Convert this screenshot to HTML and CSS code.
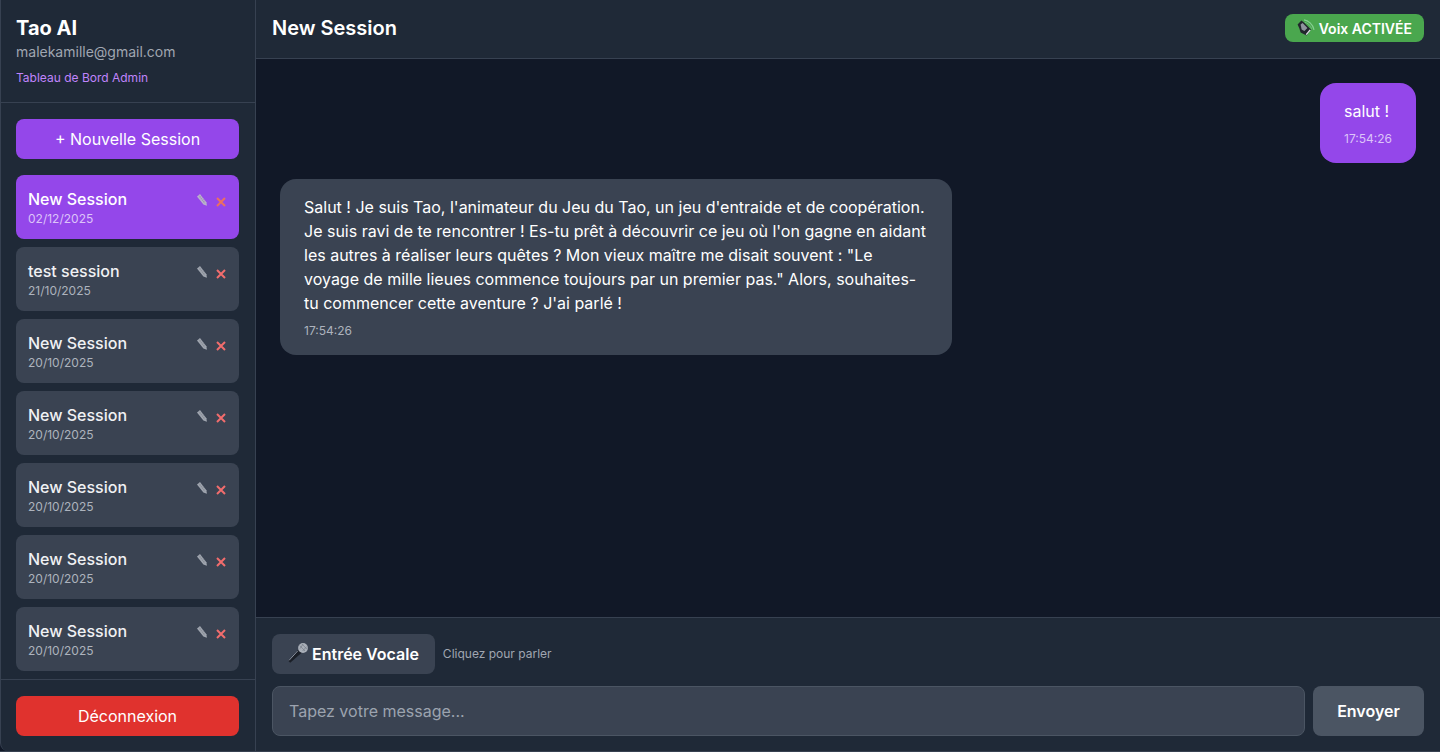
FILE: index.html
```html
<!DOCTYPE html>
<html lang="fr">
<head>
<meta charset="utf-8">
<title>Tao AI</title>
<link rel="stylesheet" href="styles.css">
</head>
<body>
<svg class="defs" width="0" height="0" aria-hidden="true">
  <symbol id="pencil" viewBox="0 0 10 12">
    <path d="M0 2.6 3 0 9.4 8.2 9.9 11.8 6.4 10.6Z" fill="currentColor"/>
    <path d="M1.8 1.4 8 9.6" stroke="#00000026" stroke-width=".6" fill="none"/>
    <path d="M2.4 3.4 4.6 2M3.6 5 5.8 3.6M4.8 6.6 7 5.2M6 8.2 8.2 6.8" stroke="#00000026" stroke-width=".6" fill="none"/>
  </symbol>
  <symbol id="cross" viewBox="0 0 10 10">
    <path d="M1 1 9 9M9 1 1 9" stroke="currentColor" stroke-width="2" fill="none"/>
  </symbol>
</svg>
<div class="app">
  <aside class="sidebar">
    <header class="side-head">
      <h1 class="brand">Tao AI</h1>
      <p class="email">malekamille@gmail.com</p>
      <a class="admin">Tableau de Bord Admin</a>
    </header>
    <div class="side-new">
      <button class="btn-primary">+ Nouvelle Session</button>
    </div>
    <ul class="sessions">
      <li class="session active">
        <div class="s-text"><div class="s-title">New Session</div><div class="s-date">02/12/2025</div></div>
        <div class="s-actions"><svg class="i-pencil"><use href="#pencil"/></svg><svg class="i-cross"><use href="#cross"/></svg></div>
      </li>
      <li class="session">
        <div class="s-text"><div class="s-title">test session</div><div class="s-date">21/10/2025</div></div>
        <div class="s-actions"><svg class="i-pencil"><use href="#pencil"/></svg><svg class="i-cross"><use href="#cross"/></svg></div>
      </li>
      <li class="session">
        <div class="s-text"><div class="s-title">New Session</div><div class="s-date">20/10/2025</div></div>
        <div class="s-actions"><svg class="i-pencil"><use href="#pencil"/></svg><svg class="i-cross"><use href="#cross"/></svg></div>
      </li>
      <li class="session">
        <div class="s-text"><div class="s-title">New Session</div><div class="s-date">20/10/2025</div></div>
        <div class="s-actions"><svg class="i-pencil"><use href="#pencil"/></svg><svg class="i-cross"><use href="#cross"/></svg></div>
      </li>
      <li class="session">
        <div class="s-text"><div class="s-title">New Session</div><div class="s-date">20/10/2025</div></div>
        <div class="s-actions"><svg class="i-pencil"><use href="#pencil"/></svg><svg class="i-cross"><use href="#cross"/></svg></div>
      </li>
      <li class="session">
        <div class="s-text"><div class="s-title">New Session</div><div class="s-date">20/10/2025</div></div>
        <div class="s-actions"><svg class="i-pencil"><use href="#pencil"/></svg><svg class="i-cross"><use href="#cross"/></svg></div>
      </li>
      <li class="session">
        <div class="s-text"><div class="s-title">New Session</div><div class="s-date">20/10/2025</div></div>
        <div class="s-actions"><svg class="i-pencil"><use href="#pencil"/></svg><svg class="i-cross"><use href="#cross"/></svg></div>
      </li>
    </ul>
    <div class="side-foot">
      <button class="btn-logout">Déconnexion</button>
    </div>
  </aside>
  <main class="main">
    <header class="topbar">
      <h2 class="top-title">New Session</h2>
      <button class="voice-toggle">
        <svg class="i-speaker" viewBox="0 0 18 18">
          <path d="M7 .8c4 .6 9 4.4 10 10" stroke="#86cf92" stroke-width="1.2" fill="none"/>
          <path d="M7.6 3.2c3 .6 6 3.2 7 6.6" stroke="#6fc17c" stroke-width="1" fill="none"/>
          <path d="M.6 5.4 4.4 1.6 7 3.6 14 10.4 9.6 16.6 3.6 13.6 2.4 9.4Z" fill="#22262d"/>
          <path d="M3.6 5.6 5.6 4 10.4 9 7.4 12 4.6 10.4Z" fill="#8f959e"/>
          <path d="M9.2 15.6 13.2 10.8" stroke="#e4e6ea" stroke-width="1.3"/>
        </svg>
        <span>Voix ACTIVÉE</span>
      </button>
    </header>
    <section class="messages">
      <div class="row row-user">
        <div class="bubble bubble-user">
          <p class="msg-text">salut !</p>
          <time class="msg-time">17:54:26</time>
        </div>
      </div>
      <div class="row">
        <div class="bubble bubble-bot">
          <p class="msg-text">Salut ! Je suis Tao, l'animateur du Jeu du Tao, un jeu d'entraide et de coopération. Je suis ravi de te rencontrer ! Es-tu prêt à découvrir ce jeu où l'on gagne en aidant les autres à réaliser leurs quêtes ? Mon vieux maître me disait souvent : "Le voyage de mille lieues commence toujours par un premier pas." Alors, souhaites-tu commencer cette aventure ? J'ai parlé !</p>
          <time class="msg-time">17:54:26</time>
        </div>
      </div>
    </section>
    <footer class="composer">
      <div class="voice-row">
        <button class="btn-voice">
          <svg class="i-mic" viewBox="0 0 20 20">
            <path d="M.2 17.8 10 6.8 13.4 10 2.2 19.8Z" fill="#1b1f27"/>
            <path d="M1 17.4 9.8 7.8" stroke="#8b93a1" stroke-width="1"/>
            <circle cx="15" cy="5" r="4.9" fill="#a9afb8"/>
            <path d="M11.8 2.6 17 8M13.8 .9 19 6.2M12 5.6 15 1.2M14.6 8 18.6 3.6" stroke="#747b87" stroke-width=".7"/>
          </svg>
          <span>Entrée Vocale</span>
        </button>
        <span class="voice-hint">Cliquez pour parler</span>
      </div>
      <div class="input-row">
        <input class="msg-input" type="text" placeholder="Tapez votre message...">
        <button class="btn-send">Envoyer</button>
      </div>
    </footer>
  </main>
</div>
</body>
</html>
```
FILE: styles.css
```css
* { box-sizing: border-box; }
html, body { margin: 0; height: 100%; }
body {
  font-family: Inter, "Liberation Sans", sans-serif;
  background: #111827;
  color: #fff;
  overflow: hidden;
}
.defs { position: absolute; }
button, input { font-family: inherit; border: 0; }
button { cursor: pointer; color: #fff; }
.app { display: flex; height: 752px; border-bottom: 1px solid #374151; }

.sidebar {
  width: 256px;
  flex: none;
  display: flex;
  flex-direction: column;
  background: #1f2937;
  border-right: 1px solid #374151;
  border-left: 1px solid #374151;
  border-bottom-left-radius: 8px;
}
.side-head {
  height: 103px;
  padding: 16px 16px 0 15px;
  border-bottom: 1px solid #374151;
}
.brand { margin: 0; font-size: 20px; line-height: 24px; font-weight: 700; }
.email { margin: 2px 0 0; font-size: 14px; line-height: 20px; color: #a0a6b1; }
.admin { display: block; margin-top: 8px; font-size: 12px; line-height: 16px; color: #c084fc; }
.side-new { padding: 16px 16px 16px 15px; }
.btn-primary, .btn-logout {
  display: block;
  width: 100%;
  height: 40px;
  border-radius: 8px;
  font-size: 16px;
  font-weight: 400;
}
.btn-primary { background: #9447ea; }
.sessions {
  list-style: none;
  margin: 0;
  padding: 0 16px 0 15px;
  flex: 1;
  min-height: 0;
  overflow: hidden;
  display: flex;
  flex-direction: column;
  gap: 8px;
}
.session {
  flex: none;
  height: 64px;
  padding: 12px;
  border-radius: 8px;
  background: #3a4352;
  display: flex;
  justify-content: space-between;
}
.session.active { background: #9447ea; }
.s-title { font-size: 16px; line-height: 24px; font-weight: 500; color: #f0f1f4; }
.s-date { font-size: 12px; line-height: 16px; color: #adb3bd; }
.active .s-title { color: #fff; }
.active .s-date { color: #dcc3f9; }
.s-actions { display: flex; align-items: flex-start; gap: 9px; padding: 7px 0 0; }
.i-pencil { width: 10px; height: 12px; color: #a0a6b0; }
.i-cross { width: 10px; height: 10px; margin: 3px 1px 0 0; color: #f26d6d; }
.active .i-cross { color: #ec6f5f; }
.active .i-pencil { color: #bbb1ce; }
.side-foot {
  height: 72px;
  flex: none;
  padding: 16px 16px 0 15px;
  border-top: 1px solid #374151;
}
.btn-logout { background: #e0322e; }

.main { flex: 1; min-width: 0; display: flex; flex-direction: column; }
.topbar {
  height: 59px;
  flex: none;
  padding: 0 16px 2px;
  display: flex;
  align-items: center;
  justify-content: space-between;
  background: #1f2937;
  border-bottom: 1px solid #374151;
}
.top-title { margin: 0; font-size: 20px; line-height: 28px; font-weight: 600; }
.voice-toggle {
  height: 28px;
  padding: 0 12px;
  display: flex;
  align-items: center;
  gap: 4px;
  border-radius: 8px;
  background: #4aa74e;
  font-size: 14px;
  font-weight: 600;
}
.i-speaker { width: 18px; height: 18px; margin-top: -1px; }
.messages {
  flex: 1;
  min-height: 0;
  padding: 24px;
  display: flex;
  flex-direction: column;
  gap: 16px;
}
.row { display: flex; }
.row-user { justify-content: flex-end; }
.bubble { padding: 16px 24px; border-radius: 16px; }
.bubble-user { background: #9447ea; }
.bubble-bot { background: #3a4352; width: 672px; }
.msg-text { margin: 0; font-size: 16px; line-height: 24px; font-weight: 400; }
.msg-time { display: block; margin-top: 8px; font-size: 12px; line-height: 16px; color: #adb3bd; }
.bubble-user .msg-time { color: #dcc3f9; }
.composer {
  height: 134px;
  flex: none;
  padding: 16px 16px 0;
  background: #1f2937;
  border-top: 1px solid #374151;
}
.voice-row { display: flex; align-items: center; gap: 8px; }
.btn-voice {
  height: 40px;
  padding: 0 16px;
  display: flex;
  align-items: center;
  gap: 4px;
  border-radius: 8px;
  background: #3a4352;
  font-size: 16px;
  font-weight: 600;
}
.i-mic { width: 20px; height: 20px; margin-top: -2px; }
.voice-hint { font-size: 12px; line-height: 16px; color: #a0a6b1; }
.input-row { display: flex; gap: 8px; margin-top: 12px; }
.msg-input {
  flex: 1;
  min-width: 0;
  height: 50px;
  padding: 0 16px;
  border: 1px solid #4b5563;
  border-radius: 8px;
  background: #3a4352;
  color: #fff;
  font-size: 16px;
  outline: none;
}
.msg-input::placeholder { color: #9ca3af; opacity: 1; }
.btn-send {
  width: 111px;
  height: 50px;
  border-radius: 8px;
  background: #4b5563;
  font-size: 16px;
  font-weight: 600;
}
```
